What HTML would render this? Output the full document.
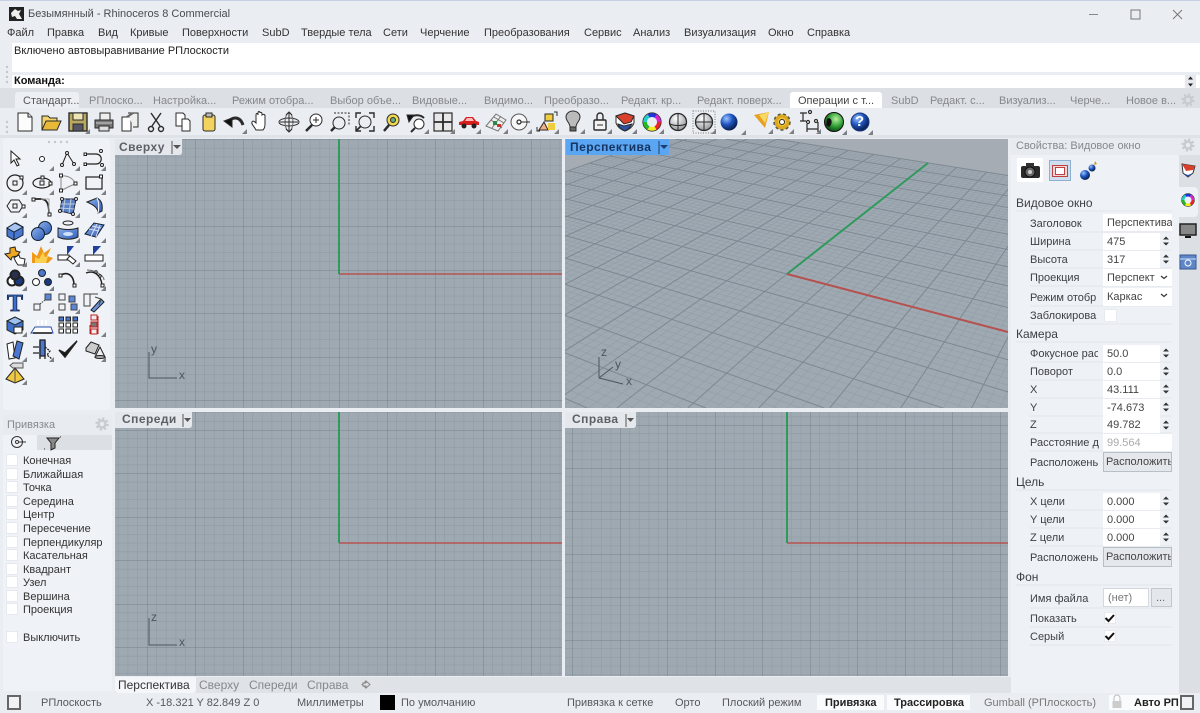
<!DOCTYPE html>
<html lang="ru"><head><meta charset="utf-8"><title>Rhinoceros 8</title>
<style>
html,body{margin:0;padding:0;overflow:hidden;height:713px}
body{width:1200px;background:#eaedf2;position:relative;font:11px/14px "Liberation Sans","Noto Sans CJK SC",sans-serif;color:#333}
#r{position:absolute;left:0;top:0;width:1200px;height:713px;overflow:hidden;filter:blur(.3px)}
.b{position:absolute}
.t{position:absolute;white-space:nowrap}
.t[style^="left:23px"]{margin-top:1px}
.tab{color:#85888d}
.pn{color:#858a90;margin-top:1px}
.vl{color:#5d6166;font-weight:bold;font-size:12px;letter-spacing:.45px}
.l{color:#3c3f44;left:1030px;margin-top:1px}
.h{color:#3c3f44;left:1016px;font-size:12px}
.f{position:absolute;left:1103px;width:57px;height:17px;background:#fff;color:#444;line-height:18px;padding-left:4px;box-sizing:border-box;white-space:nowrap;overflow:hidden}
.w{width:69px}
.btn{background:#e4e7ec;border:1px solid #b9bfc7;padding-left:2px;height:20px;line-height:19px}
.c{position:absolute;width:12px;height:12px;background:#fff;border:1px solid #e6e9ed;box-sizing:border-box;left:6px}
.s{color:#55585d;margin-top:1px}
svg{position:absolute;left:0;top:0}
</style></head><body><div id="r">
<div class="b" style="left:0;top:0;width:1200px;height:1px;background:#c5d0e2"></div>
<div class="b" style="left:12px;top:43px;width:1188px;height:29px;background:#fff"></div>
<div class="b" style="left:12px;top:75px;width:1188px;height:13px;background:#fff"></div>
<div class="b" style="left:0;top:88px;width:1200px;height:20px;background:#dcdfe3"></div>
<div class="b" style="left:15px;top:92px;width:64px;height:16px;background:#eceff4;border-radius:3px 3px 0 0"></div>
<div class="b" style="left:790px;top:92px;width:92px;height:16px;background:#fff;border-radius:3px 3px 0 0"></div>
<div class="b" style="left:0;top:135px;width:1200px;height:3px;background:#dfe3e8"></div>
<div class="b" style="left:3px;top:138px;width:107px;height:272px;background:#eff2f6;border-radius:3px"></div>
<div class="b" style="left:3px;top:415px;width:109px;height:276px;background:#eff2f6"></div>
<div class="b" style="left:3px;top:415px;width:109px;height:20px;background:#e8ebf0"></div>
<div class="b" style="left:37px;top:435px;width:75px;height:15px;background:#dcdfe3"></div>
<div class="b" style="left:115px;top:677px;width:896px;height:16px;background:#dfe2e6"></div>
<div class="b" style="left:115px;top:677px;width:81px;height:16px;background:#f4f6f9;border-radius:0 0 3px 3px"></div>
<div class="b" style="left:1011px;top:138px;width:189px;height:555px;background:#eef1f5"></div>
<div class="b" style="left:1011px;top:138px;width:189px;height:17px;background:#e8ebf0"></div>
<div class="b" style="left:1179px;top:155px;width:21px;height:538px;background:#dcdfe3"></div>
<div class="b" style="left:1179px;top:187px;width:19px;height:30px;background:#eef1f5;border-radius:0 4px 4px 0"></div>
<div class="b" style="left:1017px;top:158px;width:26px;height:24px;background:#fff"></div>
<div class="b" style="left:1049px;top:160px;width:22px;height:21px;background:#cfdff0;border:1px solid #8fb0cf;box-sizing:border-box"></div>
<div class="b" style="left:817px;top:695px;width:67px;height:15px;background:#fafbfc"></div>
<div class="b" style="left:887px;top:695px;width:83px;height:15px;background:#fafbfc"></div>
<div class="b" style="left:1109px;top:695px;width:71px;height:15px;background:#fafbfc"></div>

<svg width="1200" height="713" viewBox="0 0 1200 713">
<defs>
<pattern id="pa" width="48" height="43.5" patternUnits="userSpaceOnUse" patternTransform="translate(3 9)"><g id="pg" stroke="#949ea8" stroke-width=".8" fill="none"><path d="M9.6 0v43.5M19.2 0v43.5M28.8 0v43.5M38.4 0v43.5M0 8.7h48M0 17.4h48M0 26.1h48M0 34.8h48"/></g><path d="M0 0v43.5M0 0h48" stroke="#77818b" fill="none"/></pattern>
<pattern id="pb" width="48" height="43.5" patternUnits="userSpaceOnUse" patternTransform="translate(3 -5)"><use href="#pg"/><path d="M0 0v43.5M0 0h48" stroke="#77818b" fill="none"/></pattern>
<pattern id="pc" width="47.5" height="43" patternUnits="userSpaceOnUse" patternTransform="translate(2.5 -5)"><use href="#pg"/><path d="M0 0v43M0 0h47.5" stroke="#77818b" fill="none"/></pattern>
<clipPath id="cp"><rect x="565" y="139" width="443" height="269"/></clipPath>
<radialGradient id="bb" cx=".35" cy=".3" r=".8"><stop offset="0" stop-color="#9cc4ff"/><stop offset=".45" stop-color="#1f55c0"/><stop offset="1" stop-color="#02102e"/></radialGradient>
<radialGradient id="gg" cx=".6" cy=".35" r=".8"><stop offset="0" stop-color="#b8f0a0"/><stop offset=".5" stop-color="#2a9a30"/><stop offset="1" stop-color="#02200a"/></radialGradient>
<radialGradient id="ll" cx=".4" cy=".3" r=".8"><stop offset="0" stop-color="#fff"/><stop offset="1" stop-color="#8a8d92"/></radialGradient>
<linearGradient id="bl" x1="0" y1="0" x2="1" y2="1"><stop offset="0" stop-color="#8db0ec"/><stop offset="1" stop-color="#2d5cb8"/></linearGradient>
<path id="m" d="M12 7v5h-5z" fill="#7c8085" stroke="none"/>
<g id="gear" fill="none" stroke="#c8ccd1"><circle r="3.5" stroke-width="2.5"/><circle r="5.6" stroke-width="2" stroke-dasharray="2.2 2.2"/></g>
<g id="wheel" fill="none" stroke-width="4"><circle r="7" stroke="#e22" stroke-dasharray="7.4 36.6"/><circle r="7" stroke="#ee2" stroke-dasharray="7.4 36.6" stroke-dashoffset="-7.3"/><circle r="7" stroke="#2b2" stroke-dasharray="7.4 36.6" stroke-dashoffset="-14.6"/><circle r="7" stroke="#2cc" stroke-dasharray="7.4 36.6" stroke-dashoffset="-22"/><circle r="7" stroke="#23d" stroke-dasharray="7.4 36.6" stroke-dashoffset="-29.3"/><circle r="7" stroke="#d2c" stroke-dasharray="7.4 36.6" stroke-dashoffset="-36.6"/><circle r="9.2" stroke="#333" stroke-width=".8"/></g>
</defs>
<!-- viewports -->
<rect x="115" y="139" width="447" height="269" fill="#9fa9b2"/><rect x="115" y="139" width="447" height="269" fill="url(#pa)"/>
<rect x="115" y="412" width="447" height="264" fill="#9fa9b2"/><rect x="115" y="412" width="447" height="264" fill="url(#pb)"/>
<rect x="565" y="412" width="443" height="264" fill="#9fa9b2"/><rect x="565" y="412" width="443" height="264" fill="url(#pc)"/>
<rect x="565" y="139" width="443" height="269" fill="#a5acb3"/>
<g clip-path="url(#cp)"><path d="M693 126L1279 218L1008 600L48 358Z" fill="#9fa9b2"/><g id="pers" fill="none"></g></g>
<path d="M339 139V274" stroke="#2f9a5c" stroke-width="2"/><path d="M339 274H562" stroke="#b5524f" stroke-width="1.6"/>
<path d="M339 412V543" stroke="#2f9a5c" stroke-width="2"/><path d="M339 543H562" stroke="#b5524f" stroke-width="1.6"/>
<path d="M787 412V543" stroke="#2f9a5c" stroke-width="2"/><path d="M787 543H1008" stroke="#b5524f" stroke-width="1.6"/>
<path d="M787 274L928 163" stroke="#2f9a5c" stroke-width="2"/><path d="M787 274L1008 332" stroke="#b5524f" stroke-width="2"/>
<g fill="none" stroke="#4e545b" stroke-width="1"><path d="M149 352V378H177"/><path d="M149 618V645H177"/><path d="M599 378L623 384M599 378V357M599 378L613 367"/></g>
<!-- label tabs -->
<path d="M115 139H182V152q0 3-3 3H115Z" fill="#e4e7ec"/><path d="M115 412H192V425q0 3-3 3H115Z" fill="#e4e7ec"/><path d="M565 412H636V425q0 3-3 3H565Z" fill="#e4e7ec"/><path d="M566 139H669V155H566Z" fill="#5aa6f2"/>
<g stroke="#555" fill="none"><path d="M172 141V154"/><path d="M183 414V427"/><path d="M626 414V427"/></g><path d="M659 141V154" stroke="#1d3d6b"/>
<path d="M173 145h8l-4 4zM184 418h7l-3.500 4zM627 418h7l-3.500 4z" fill="#555"/><path d="M660 145h8l-4 4z" fill="#1d3d6b"/>
<!-- grips -->
<g fill="#c3c7cc"><circle cx="7" cy="67" r="1.200"/><circle cx="7" cy="72" r="1.200"/><circle cx="7" cy="77" r="1.200"/><circle cx="7" cy="82" r="1.200"/><circle cx="7" cy="122" r="1.200"/><circle cx="7" cy="127" r="1.200"/><circle cx="7" cy="132" r="1.200"/><circle cx="49" cy="142" r="1.200"/><circle cx="55" cy="142" r="1.200"/><circle cx="61" cy="142" r="1.200"/><circle cx="67" cy="142" r="1.200"/></g>
<!-- window controls -->
<path d="M1089 14.500h9" stroke="#888" stroke-width="1"/><rect x="1131" y="10" width="9" height="9" fill="none" stroke="#777"/><path d="M1173 10l9 9m0-9l-9 9" stroke="#777" fill="none"/>
<!-- logo -->
<rect x="9" y="7" width="15" height="14" fill="#222"/><path d="M11 13l4-4 3 2 3-1-2 4 3 5h-5l-2-3-3 1z" fill="#eee"/>
<!-- cmd scroll -->
<rect x="1185" y="75" width="11" height="13" fill="#e5e8ec"/><path d="M1190.500 76.500l2.500 3h-5zM1190.500 86.500l-2.500-3h5z" fill="#222"/>
<use href="#gear" x="1188" y="100"/><use href="#gear" x="102" y="424"/><use href="#gear" x="1188" y="145"/>

<!-- top toolbar -->
<g stroke="#2b2b2b" stroke-width="1" fill="none">
<g transform="translate(25 122)"><path d="M-7-9H3L7-5V9H-7Z" fill="#fcfcfc"/><path d="M3-9V-5H7" fill="#ddd"/></g>
<g transform="translate(51 122)"><path d="M-9 8V-6H-3L-1-4H6V-1" fill="#f2d46a"/><path d="M-9 8L-5-1H10L6 8Z" fill="#e8b838"/></g>
<g transform="translate(78 122)"><rect x="-9" y="-9" width="18" height="18" fill="#b8a860" stroke-width="1.400"/><rect x="-5" y="-9" width="10" height="7" fill="#efe6b8"/><rect x="-5" y="2" width="10" height="7" fill="#556"/><use href="#m"/></g>
<g transform="translate(104 122)"><path d="M-4-9H6V-2H-4Z" fill="#eee"/><path d="M-9-2H9V6H-9Z" fill="#777"/><path d="M-5 4H5V9H-5Z" fill="#ddd"/><path d="M-8 1H8" stroke="#ccc"/></g>
<g transform="translate(130 122)"><path d="M-8-5H1V9H-8Z" fill="#fff"/><path d="M-2-9H8V5H3" fill="#eee"/><path d="M-3-5L3-9" stroke="#666" stroke-width="2"/></g>
<g transform="translate(156 122)" stroke-width="1.400"><path d="M-5-9L4 4M5-9L-4 4"/><circle cx="-5" cy="7" r="2.500"/><circle cx="5" cy="7" r="2.500"/></g>
<g transform="translate(183 122)"><path d="M-7-9H0L2-7V4H-7Z" fill="#fff"/><path d="M-1-3H5L7-1V9H-1Z" fill="#fff"/></g>
<g transform="translate(209 122)"><rect x="-6" y="-7" width="12" height="16" rx="2" fill="#f3d35e"/><rect x="-3" y="-9" width="6" height="4" fill="#bbb"/></g>
<g transform="translate(235 122)"><path d="M-7 1C-3-6 5-6 8 3" stroke-width="3"/><path d="M-11-1L-3 5-3-4Z" fill="#111"/><use href="#m"/></g>
<g transform="translate(260 122)"><path d="M-4 8C-6 4-9 2-8 0-7-2-5 0-4 1V-7C-4-9-2-9-2-7V-9C-2-11 0-11 0-9V-9C0-10 2-10 2-8V-7C3-8 5-8 5-6V2C5 5 4 7 3 8Z" fill="#fff"/></g>
<g transform="translate(289 122)"><ellipse rx="10" ry="4"/><ellipse rx="4" ry="9" stroke="#666"/><path d="M0-10V10M-9 0H9"/><path d="M-3-7L0-10 3-7M-3 7L0 10 3 7" /></g>
<g transform="translate(314 122)"><circle cx="2" cy="-2" r="6" fill="#fff"/><path d="M-2 3L-8 9" stroke-width="2.500"/><path d="M2-5V1M-1-2H5"/></g>
<g transform="translate(340 122)"><circle cx="-1" cy="1" r="6"/><path d="M-5 5L-9 9" stroke-width="2.500"/><path d="M-6-9H9V3" stroke-dasharray="2 1.500"/></g>
<g transform="translate(365 122)"><circle r="6"/><path d="M-9-4V-9H-4M9-4V-9H4M-9 4V9H-4M9 4V9H4" stroke-width="1.400"/><path d="M-4 4L-9 9" stroke-width="1.800"/></g>
<g transform="translate(392 122)"><circle cx="1" cy="-2" r="6" fill="#f0d850"/><circle cx="1" cy="-2" r="2.500" fill="#6a8"/><path d="M-3 3L-8 9" stroke-width="2.500"/></g>
<g transform="translate(417 122)"><circle cx="2" cy="2" r="5" fill="#fff"/><path d="M-2 6L-6 10" stroke-width="2"/><path d="M-8-2C-5-8 3-8 7-4" stroke-width="2"/><path d="M-10-7L-3-7-8 0Z" fill="#111"/><use href="#m"/></g>
<g transform="translate(443 122)"><rect x="-9" y="-9" width="18" height="18" fill="#e8e8e8" stroke-width="1.200"/><path d="M0-9V9M-9 0H9" stroke-width="1.800"/><use href="#m"/></g>
<g transform="translate(469 122)" stroke="none"><path d="M-10 3V0L-6-1-3-5H4L7-1 10 0V3Z" fill="#d81f1f"/><circle cx="-5" cy="4" r="2.500" fill="#222"/><circle cx="5" cy="4" r="2.500" fill="#222"/><path d="M-2-4H3L5-1H-4Z" fill="#fbb"/><use href="#m"/></g>
<g transform="translate(496 122)" stroke="#777"><path d="M-10 4L0-8 10-2 2 9Z" fill="#eee"/><path d="M-5-2L6 6M-2-5L8 1M-4 6L5-6"/><path d="M-3-1h4v4h-4z" fill="#2a8a4a" stroke="none"/><path d="M1 2h4v3h-4z" fill="#c33" stroke="none"/><use href="#m"/></g>
<g transform="translate(520 122)"><circle cx="-1" r="8" stroke="#555" fill="#f8f8f8"/><circle cx="-1" r="2" stroke-width="1.200"/><path d="M1 0H10"/><use href="#m"/></g>
<g transform="translate(547 122)"><rect x="-2" y="-8" width="8" height="7" fill="#f0cc40"/><path d="M-8 8L-3 0 1 8Z" fill="#f4b080"/><rect x="1" y="1" width="7" height="7" fill="#f0cc40" stroke="none"/><path d="M7-10H10V-6M-10 5V9H-7"/><use href="#m"/></g>
<g transform="translate(573 122)"><path d="M-3 5C-3 1-7-1-7-5A7 6 0 0 1 7-5C7-1 3 1 3 5Z" fill="#bbb"/><rect x="-3" y="5" width="6" height="4" fill="#666"/><use href="#m"/></g>
<g transform="translate(600 122)"><rect x="-6" y="-2" width="12" height="10" rx="1" fill="#f2f2f2" stroke-width="1.400"/><path d="M-3-2V-6A3 3 0 0 1 3-6V-2" stroke-width="1.400"/><path d="M-3 3H3"/><use href="#m"/></g>
<g transform="translate(625 122)"><path d="M-9-6L0-9 9-6V1C7 6 3 8 0 9-3 8-7 6-9 1Z" fill="#fff"/><path d="M-9-6L0-9 9-6 6 0-1 2Z" fill="#d8402c"/><path d="M-7 2L-1 4 7 2C5 6 2 8 0 9-3 8-6 6-7 2Z" fill="#2a50a8"/><use href="#m"/></g>
<g transform="translate(652 122)"><use href="#wheel"/><use href="#m"/></g>
<g transform="translate(678 122)"><circle r="8.500" fill="url(#ll)" stroke-width="1.300"/><path d="M0-8.500V8.500M-8 2C-4 4 4 4 8 2"/></g>
<g transform="translate(704 122)"><rect x="-11" y="-11" width="22" height="22" stroke="#777" stroke-dasharray="1 1.500"/><circle r="8.500" fill="url(#ll)" stroke-width="1.300"/><path d="M0-8.500V8.500M-8 0H8"/><use href="#m"/></g>
<g transform="translate(729 122)"><circle r="8.500" fill="url(#bb)" stroke="none"/><use href="#m" x="5" y="1"/></g>
<g transform="translate(761 122)" stroke="none"><path d="M-7-7L8-10 4 6Z" fill="#e8a020"/><path d="M-2-7L8-10 4 1Z" fill="#f8d860"/><use href="#m"/></g>
<g transform="translate(782 122)"><circle r="6" fill="#f0c838" stroke-width="3.500" stroke="#dca820" /><circle r="8" stroke="#554" stroke-dasharray="3 2.500" stroke-width="1.500"/><circle r="2.500" fill="#fff"/><use href="#m"/></g>
<g transform="translate(809 122)" stroke-width="1.200"><path d="M-9-9H-2M-6-9V-1M-9-1H-3"/><circle cx="1" cy="-10" r="1.500" fill="#fff"/><circle cx="-1" cy="0" r="1.500" fill="#fff"/><path d="M-2 2V10M9 0V10M-2 7H9"/><circle cx="7" cy="-1" r="1.500" fill="#fff"/><use href="#m"/></g>
<g transform="translate(834 122)"><circle r="9.500" fill="url(#gg)" stroke="#111"/><path d="M-7-3C-3-6 0 1-5 5L-8 3Z" fill="#111" stroke="none"/><use href="#m" x="1" y="1"/></g>
<g transform="translate(860 122)"><circle r="9" fill="url(#bb)" stroke="#1a3a80"/><use href="#m" x="1" y="1"/></g>
</g>

<!-- left toolbar -->
<g stroke="#222" stroke-width="1" fill="none">
<g transform="translate(15 159)"><path d="M-4-8V4L-1 1 2 7 4 6 1 0H5Z" fill="#fff"/></g>
<g transform="translate(42 159)"><circle r="2.500" fill="#fff"/><use href="#m"/></g>
<g transform="translate(68 159)"><path d="M-6 6L-1-6 6 5"/><g fill="#fff"><circle cx="-6" cy="6" r="1.500"/><circle cx="-1" cy="-6" r="1.500"/><circle cx="6" cy="5" r="1.500"/></g><use href="#m"/></g>
<g transform="translate(94 159)"><path d="M-7-5H2C9-5 9 5 2 5H-7" stroke-width="1.200"/><g fill="#fff"><rect x="-10" y="-6" width="2.500" height="2.500"/><rect x="-10" y="4" width="2.500" height="2.500"/><circle cx="7" cy="-8" r="1.500"/><circle cx="8" cy="6" r="1.500"/></g><use href="#m"/></g>
<g transform="translate(15 183)"><circle r="8" stroke-width="1.200"/><rect x="-2" y="-2" width="4" height="4"/><rect x="5" y="-7" width="3" height="3" fill="#fff"/><use href="#m"/></g>
<g transform="translate(42 183)"><ellipse rx="9" ry="5" stroke-width="1.200"/><rect x="-2" y="-2" width="4" height="4"/><rect x="-1" y="-7" width="3" height="3" fill="#fff"/><rect x="7" y="-1" width="3" height="3" fill="#fff"/><use href="#m"/></g>
<g transform="translate(68 183)"><path d="M-7-7C2-8 7-2 7 1 2 3-4 6-7 8Z" stroke="#888"/><g fill="#fff"><rect x="-8.500" y="-9" width="3" height="3"/><rect x="6" y="-1" width="3" height="3"/><rect x="-8.500" y="6" width="3" height="3"/></g><use href="#m"/></g>
<g transform="translate(94 183)"><rect x="-8" y="-6" width="16" height="12" stroke-width="1.200"/><rect x="5.500" y="-8" width="3" height="3" fill="#fff"/><use href="#m"/></g>
<g transform="translate(15 206)"><path d="M-8 0L-4-6H4L8 0 4 6H-4Z"/><rect x="-2" y="-2" width="4" height="4"/><rect x="7" y="-1" width="3" height="3" fill="#fff"/><use href="#m"/></g>
<g transform="translate(42 206)"><path d="M-9-7H-1C5-7 7-2 7 8" stroke-width="1.800"/><path d="M-1-7H7V8" stroke="#aaa"/><g fill="#fff"><rect x="-10" y="-8" width="3" height="3"/><rect x="6" y="7" width="3" height="3"/></g></g>
<g transform="translate(68 206)"><path d="M-6-7L8-7 5 8-8 5Z" fill="#5a80c8" stroke="#223"/><path d="M-3-7L-5 6M3-7L1 7M-7-2L7-2M-8 2L6 3" stroke="#bcd"/><g fill="#fff"><circle cx="-6" cy="-7" r="1.500"/><circle cx="8" cy="-7" r="1.500"/><circle cx="5" cy="8" r="1.500"/><circle cx="-8" cy="5" r="1.500"/></g><use href="#m"/></g>
<g transform="translate(94 206)"><path d="M-7-4L3-8C7-6 9-2 8 5L4 7C4 2 0-1-7-4Z" fill="url(#bl)"/><path d="M3-8C5-4 5 2 4 7" stroke="#fff"/><use href="#m"/></g>
<g transform="translate(15 231)"><path d="M-8-3L1-8 8-4V4L-1 9-8 5Z" fill="#4a78d0" stroke="#123"/><path d="M-8-3L-1 1 8-4-0-8Z" fill="#a8c4f0" stroke="#123"/><path d="M-1 1V9" stroke="#123"/><use href="#m"/></g>
<g transform="translate(42 231)"><circle cx="3" cy="-3" r="6.500" fill="url(#bl)" stroke="#123"/><circle cx="-4" cy="3" r="6.500" fill="url(#bl)" stroke="#123"/><use href="#m"/></g>
<g transform="translate(68 231)"><ellipse cy="-8" rx="5" ry="2"/><path d="M-10-3C-4-1 4-1 10-3V6C4 9-4 9-10 6Z" fill="url(#bl)"/><ellipse cy="3" rx="5" ry="2" fill="#cfe0f8" stroke="none"/><use href="#m"/></g>
<g transform="translate(94 231)"><path d="M-9 3L0-8 10-6 2 6Z" fill="url(#bl)" stroke="#123"/><path d="M-5-2L5 0M-2-5L7-3M-3 5L3-7M2 6L6-6" stroke="#dde"/><use href="#m"/></g>
<g transform="translate(15 255)"><path d="M-10-1L-5-2-5-7 0-8 1-4 5-3 2 1-3 2-4 5Z" fill="#f0a820" stroke="#222"/><path d="M-1 3L4 0 5 3 10 4 9 10 3 10 1 7Z" fill="#fff" stroke="#222"/><use href="#m"/></g>
<g transform="translate(42 255)" stroke="none"><path d="M-10 8V-3L-5 1-1-9 2-2 9-7 5 1 11 3 6 8Z" fill="#f09818"/><path d="M-7 8V2L-3 4 1-3 3 2 6 1 4 8Z" fill="#fbd050"/></g>
<g transform="translate(68 255)"><rect x="-10" y="0" width="11" height="5" fill="#fff"/><path d="M-1 0V-9L6-9-1 0" fill="#2040a0" stroke="none"/><path d="M2 1L8 6 5 9-1 4Z" fill="#fff"/><use href="#m"/></g>
<g transform="translate(94 255)"><rect x="-9" y="0" width="18" height="6" fill="#fff"/><path d="M-1 0V-9L7-9-1 0" fill="#2040a0" stroke="none"/><use href="#m"/></g>
<g transform="translate(15 279)"><circle cx="-3" cy="2" r="4.500" fill="#fff" stroke-width="2"/><circle cx="4" cy="2" r="4.500" fill="#1b3a80" stroke-width="2"/><circle cy="-4" r="4.500" fill="#28304a" stroke-width="2"/><use href="#m"/></g>
<g transform="translate(42 279)"><circle cy="-6" r="3.500" fill="#4a78d0"/><circle cx="-6" cy="3" r="3.500" fill="#fff"/><circle cx="6" cy="3" r="3.500" fill="#1b3a80"/><use href="#m"/></g>
<g transform="translate(68 279)"><path d="M-7-4C0-8 6-3 6 6" stroke-width="1.600"/><rect x="-9" y="-5" width="3" height="3" fill="#fff"/><rect x="5" y="5" width="3" height="3" fill="#fff"/></g>
<g transform="translate(94 279)"><path d="M-8-6C0-9 7-4 8 6" stroke-width="1.400"/><path d="M-7-9C2-9 10-3 10 1" stroke="#666"/><g fill="#fff"><circle cx="2" cy="-7" r="1.200"/><circle cx="6" cy="-3" r="1.200"/><rect x="7" y="5" width="3" height="3"/></g><use href="#m"/></g>
<g transform="translate(15 302)"><text x="0" y="9" text-anchor="middle" font-family="Liberation Serif" font-weight="bold" font-size="24" fill="#3d70c8" stroke="#102050" stroke-width=".8">T</text></g>
<g transform="translate(42 302)" stroke="#444"><rect x="-8" y="2" width="6" height="6"/><rect x="3" y="-8" width="6" height="6" fill="#5a88d8"/><path d="M-2 2L3-2" stroke-dasharray="1.500 1"/><use href="#m"/></g>
<g transform="translate(68 302)" stroke="#444"><rect x="-9" y="-8" width="6" height="6"/><rect x="-9" y="2" width="6" height="6"/><rect x="1" y="-6" width="6" height="6" fill="#5a88d8"/><rect x="3" y="2" width="6" height="6" fill="#5a88d8"/><use href="#m"/></g>
<g transform="translate(94 302)"><path d="M-10-8H-4V4H-10ZM-4-8H4" stroke="#444"/><path d="M-3 8L7-3 10 0 0 10Z" fill="#6a94dc"/><path d="M1-5L7-3 5 3" stroke="#444"/></g>
<g transform="translate(15 325)"><path d="M-8-4L0-8 8-4V5L0 9-8 5Z" fill="#3f70cc"/><path d="M-8-4L0-8 8-4 0 0Z" fill="#9cc0f0"/><path d="M-1 2H7V8H-1Z" fill="#fff"/><use href="#m"/></g>
<g transform="translate(42 325)"><path d="M-11 8L-7 2H9L11 8Z" fill="#fff" stroke="#2a50a8"/><path d="M-4 0V-5M0 0V-5M4 0V-5" stroke="#fff" stroke-width="2"/><path d="M-9 8H10" stroke="#111" stroke-width="1.400"/></g>
<g transform="translate(68 325)" fill="#4a78d0" stroke="#222"><rect x="-9" y="-8" width="4.500" height="4"/><rect x="-2" y="-8" width="4.500" height="4"/><rect x="5" y="-8" width="4.500" height="4"/><rect x="-9" y="-2" width="4.500" height="4" fill="#fff"/><rect x="-2" y="-2" width="4.500" height="4" fill="#fff"/><rect x="5" y="-2" width="4.500" height="4" fill="#fff"/><rect x="-9" y="4" width="4.500" height="4" fill="#fff"/><rect x="-2" y="4" width="4.500" height="4" fill="#fff"/><rect x="5" y="4" width="4.500" height="4" fill="#fff"/></g>
<g transform="translate(94 325)" stroke="#c02020"><rect x="-3" y="-10" width="6" height="5" fill="#eee"/><rect x="-3" y="-3" width="6" height="5" fill="#777"/><rect x="-3" y="4" width="6" height="5" fill="#eee"/><path d="M-4 0V9M4-9V9"/><use href="#m"/></g>
<g transform="translate(15 350)"><path d="M-8-6L-2-8 0 8-6 9Z" fill="#fff"/><path d="M2-9L8-7 4 9-2 6Z" fill="#4a78d0"/><use href="#m"/></g>
<g transform="translate(42 350)" stroke-width="1.300"><path d="M-9-3H-3M-9 3H-3M-2-9V9M3-9V9" /><rect x="-2" y="-10" width="5" height="16" fill="#4a78d0"/><path d="M3-3L8 1 5 5 10 9" stroke-dasharray="2 1"/><use href="#m"/></g>
<g transform="translate(68 350)"><path d="M-9 0L-3 7 9-9-3 3Z" fill="#111" stroke-width="1.500"/></g>
<g transform="translate(94 350)"><path d="M-8-2L-3-8 5-5 1 4-8 1Z" fill="#ccc"/><path d="M6-3L11 7H1Z" fill="#eee"/><ellipse cx="6" cy="7" rx="5" ry="1.500" fill="#aaa"/><use href="#m"/></g>
<g transform="translate(15 373)"><path d="M-2-10H8V-5H-2L-5-7.500Z" fill="#ddd" stroke="#555"/><path d="M-9 6L0-5 9 6 0 10Z" fill="#f0c840"/><path d="M0-5V10" stroke="#555"/><use href="#m"/></g>
</g>

<!-- snap tab icons -->
<g fill="none" stroke="#333"><circle cx="17" cy="442" r="5.500"/><circle cx="17" cy="442" r="1.500" fill="#fff"/><path d="M19 442H26"/><path d="M47 438H59L55 443V448L51 450V443Z" fill="#888" stroke="#222"/><path d="M44 449h1M60 437h1"/></g>

<!-- right panel icons -->
<g>
<rect x="1021" y="166" width="19" height="12" rx="2" fill="#2a2a2a"/><rect x="1026" y="163" width="8" height="4" fill="#333"/><circle cx="1030" cy="172" r="5" fill="#666" stroke="#111"/><circle cx="1030" cy="172" r="2" fill="#ccc"/>
<rect x="1052.500" y="165.500" width="15" height="11" fill="#f4d8d8" stroke="#c04040"/><rect x="1055.500" y="167.500" width="9" height="7" fill="#fff" stroke="#c04040"/>
<circle cx="1085" cy="175" r="5" fill="url(#bb)"/><circle cx="1092" cy="168" r="3.500" fill="url(#bb)"/><path d="M1095 161l2 3-3 1z" fill="#c8a020"/>
<g transform="translate(1188 170)"><path d="M-6-6L0-5 7-4 5 3 0 7-5 3Z" fill="#fff" stroke="#333"/><path d="M-6-6L7-4 5 0-2 1Z" fill="#d8402c"/><path d="M-5 3L0 5 5 3 0 7Z" fill="#2a50a8"/></g>
<g transform="translate(1188 200) scale(.7)"><use href="#wheel"/></g>
<g transform="translate(1188 231)"><rect x="-8" y="-7" width="16" height="11" fill="#888" stroke="#222" stroke-width="1.500"/><path d="M-3 6H3" stroke="#111" stroke-width="2"/></g>
<g transform="translate(1188 262)"><rect x="-8" y="-7" width="16" height="14" fill="#5f86c8" stroke="#3a5a90"/><path d="M-8-3H8" stroke="#cfe0f8"/><circle cy="1" r="3" fill="none" stroke="#fff"/></g>
</g>
<!-- spinners -->
<g fill="#333" id="sp">
<path d="M1166 236.500l3 3h-6zM1166 245.500l-3-3h6zM1166 254.500l3 3h-6zM1166 263.500l-3-3h6zM1166 348.500l3 3h-6zM1166 357.500l-3-3h6zM1166 366.500l3 3h-6zM1166 375.500l-3-3h6zM1166 384.500l3 3h-6zM1166 393.500l-3-3h6zM1166 402.500l3 3h-6zM1166 411.500l-3-3h6zM1166 420.500l3 3h-6zM1166 429.500l-3-3h6zM1166 496.500l3 3h-6zM1166 505.500l-3-3h6zM1166 514.500l3 3h-6zM1166 523.500l-3-3h6zM1166 532.500l3 3h-6zM1166 541.500l-3-3h6z"/>
</g>
<g stroke="#e2e5ea"><path d="M1016 211H1172M1016 342H1172M1016 490H1172M1016 585H1172M1030 232H1172M1030 250H1172M1030 268H1172M1030 286H1172M1030 306H1172M1030 324H1172M1030 362H1172M1030 380H1172M1030 398H1172M1030 416H1172M1030 433H1172M1030 451H1172M1030 510H1172M1030 528H1172M1030 546H1172M1030 608H1172M1030 627H1172M1030 645H1172"/></g>
<!-- status icons -->
<rect x="8" y="696" width="12" height="13" fill="#f0f2f5" stroke="#666" stroke-width="2"/>
<rect x="1181" y="696" width="12" height="13" fill="#f0f2f5" stroke="#666" stroke-width="2"/>
<rect x="380" y="695" width="15" height="15" fill="#000"/>
<path d="M1114 701V698a3 3 0 0 1 6 0v3" fill="none" stroke="#bbb"/><rect x="1112.500" y="701" width="9" height="7" fill="#ccc"/>
<path d="M366 681v2h-3v3h3v2l4-3.500zM366 681l-4 3.500 4 3.500" fill="none" stroke="#888"/>
</svg>

<!-- title/menu text -->
<div class="t" style="left:28px;top:7px;color:#4a4d52;font-size:11px">Безымянный - Rhinoceros 8 Commercial</div>
<div class="t" style="left:7px;top:26px">Файл</div><div class="t" style="left:47px;top:26px">Правка</div><div class="t" style="left:98px;top:26px">Вид</div><div class="t" style="left:130px;top:26px">Кривые</div><div class="t" style="left:182px;top:26px">Поверхности</div><div class="t" style="left:262px;top:26px">SubD</div><div class="t" style="left:301px;top:26px">Твердые тела</div><div class="t" style="left:383px;top:26px">Сети</div><div class="t" style="left:420px;top:26px">Черчение</div><div class="t" style="left:484px;top:26px">Преобразования</div><div class="t" style="left:584px;top:26px">Сервис</div><div class="t" style="left:633px;top:26px">Анализ</div><div class="t" style="left:684px;top:26px">Визуализация</div><div class="t" style="left:768px;top:26px">Окно</div><div class="t" style="left:807px;top:26px">Справка</div>
<div class="t" style="left:14px;top:44px;color:#222">Включено автовыравнивание РПлоскости</div>
<div class="t" style="left:14px;top:74px;color:#111;font-weight:bold">Команда:</div>
<!-- tabs -->
<div class="t tab" style="top:94px;left:23px;color:#555">Стандарт...</div><div class="t tab" style="left:89px;top:94px">РПлоско...</div><div class="t tab" style="left:153px;top:94px">Настройка...</div><div class="t tab" style="left:232px;top:94px">Режим отобра...</div><div class="t tab" style="left:330px;top:94px">Выбор объе...</div><div class="t tab" style="left:412px;top:94px">Видовые...</div><div class="t tab" style="left:484px;top:94px">Видимо...</div><div class="t tab" style="left:544px;top:94px">Преобразо...</div><div class="t tab" style="left:621px;top:94px">Редакт. кр...</div><div class="t tab" style="left:697px;top:94px">Редакт. поверх...</div><div class="t tab" style="left:798px;top:94px;color:#444">Операции с т...</div><div class="t tab" style="left:891px;top:94px">SubD</div><div class="t tab" style="left:930px;top:94px">Редакт. с...</div><div class="t tab" style="left:999px;top:94px">Визуализ...</div><div class="t tab" style="left:1070px;top:94px">Черче...</div><div class="t tab" style="left:1126px;top:94px">Новое в...</div>
<!-- help glyph -->
<div class="t" style="left:855px;top:113px;color:#fff;font-weight:bold;font-size:15px;line-height:18px">?</div>
<!-- viewport labels -->
<div class="t vl" style="left:119px;top:140px">Сверху</div>
<div class="t vl" style="left:570px;top:140px;color:#16345f">Перспектива</div>
<div class="t vl" style="left:122px;top:412px">Спереди</div>
<div class="t vl" style="left:572px;top:412px">Справа</div>
<div class="t" style="left:151px;top:342px;color:#4e545b;font-size:12px">y</div><div class="t" style="left:179px;top:368px;color:#4e545b;font-size:12px">x</div>
<div class="t" style="left:151px;top:610px;color:#4e545b;font-size:12px">z</div><div class="t" style="left:179px;top:635px;color:#4e545b;font-size:12px">x</div>
<div class="t" style="left:601px;top:345px;color:#4e545b;font-size:12px">z</div><div class="t" style="left:615px;top:357px;color:#4e545b;font-size:12px">y</div><div class="t" style="left:626px;top:374px;color:#4e545b;font-size:12px">x</div>
<!-- bottom tabs -->
<div class="t" style="left:118px;top:678px;color:#333;font-size:12px">Перспектива</div><div class="t tab" style="left:199px;top:678px;font-size:12px">Сверху</div><div class="t tab" style="left:249px;top:678px;font-size:12px">Спереди</div><div class="t tab" style="left:307px;top:678px;font-size:12px">Справа</div>
<!-- snap panel -->
<div class="t pn" style="left:7px;top:417px">Привязка</div>
<div class="c" style="top:454px"></div><div class="t" style="left:23px;top:453px">Конечная</div>
<div class="c" style="top:468px"></div><div class="t" style="left:23px;top:467px">Ближайшая</div>
<div class="c" style="top:481px"></div><div class="t" style="left:23px;top:480px">Точка</div>
<div class="c" style="top:495px"></div><div class="t" style="left:23px;top:494px">Середина</div>
<div class="c" style="top:508px"></div><div class="t" style="left:23px;top:507px">Центр</div>
<div class="c" style="top:522px"></div><div class="t" style="left:23px;top:521px">Пересечение</div>
<div class="c" style="top:536px"></div><div class="t" style="left:23px;top:535px">Перпендикуляр</div>
<div class="c" style="top:549px"></div><div class="t" style="left:23px;top:548px">Касательная</div>
<div class="c" style="top:563px"></div><div class="t" style="left:23px;top:562px">Квадрант</div>
<div class="c" style="top:576px"></div><div class="t" style="left:23px;top:575px">Узел</div>
<div class="c" style="top:590px"></div><div class="t" style="left:23px;top:589px">Вершина</div>
<div class="c" style="top:603px"></div><div class="t" style="left:23px;top:602px">Проекция</div>
<div class="c" style="top:631px"></div><div class="t" style="left:23px;top:630px">Выключить</div>
<!-- properties -->
<div class="t pn" style="left:1016px;top:138px">Свойства: Видовое окно</div>
<div class="t h" style="top:196px">Видовое окно</div>
<div class="t l" style="top:216px">Заголовок</div><div class="f w" style="top:214px">Перспектива</div>
<div class="t l" style="top:234px">Ширина</div><div class="f" style="top:233px">475</div>
<div class="t l" style="top:252px">Высота</div><div class="f" style="top:251px">317</div>
<div class="t l" style="top:270px">Проекция</div><div class="f w" style="top:269px">Перспект</div>
<div class="t l" style="top:290px;width:72px;overflow:hidden">Режим отобр</div><div class="f w" style="top:288px;height:18px;line-height:18px">Каркас</div>
<div class="t l" style="top:308px;width:72px;overflow:hidden">Заблокирова</div><div class="c" style="left:1104px;top:309px;width:13px;height:13px"></div>
<div class="t h" style="top:327px">Камера</div>
<div class="t l" style="top:346px;width:68px;overflow:hidden">Фокусное рас</div><div class="f" style="top:345px">50.0</div>
<div class="t l" style="top:364px">Поворот</div><div class="f" style="top:363px">0.0</div>
<div class="t l" style="top:382px">X</div><div class="f" style="top:381px">43.111</div>
<div class="t l" style="top:400px">Y</div><div class="f" style="top:399px">-74.673</div>
<div class="t l" style="top:417px">Z</div><div class="f" style="top:416px">49.782</div>
<div class="t l" style="top:435px;width:70px;overflow:hidden">Расстояние д</div><div class="f w" style="top:434px;color:#aaa">99.564</div>
<div class="t l" style="top:455px;width:69px;overflow:hidden">Расположень</div><div class="f w btn" style="top:452px">Расположить</div>
<div class="t h" style="top:475px">Цель</div>
<div class="t l" style="top:494px">X цели</div><div class="f" style="top:493px">0.000</div>
<div class="t l" style="top:512px">Y цели</div><div class="f" style="top:511px">0.000</div>
<div class="t l" style="top:530px">Z цели</div><div class="f" style="top:529px">0.000</div>
<div class="t l" style="top:550px;width:69px;overflow:hidden">Расположень</div><div class="f w btn" style="top:547px">Расположить</div>
<div class="t h" style="top:570px">Фон</div>
<div class="t l" style="top:591px">Имя файла</div><div class="f" style="top:588px;width:46px;height:19px;line-height:18px;color:#777;border:1px solid #d5d9df">(нет)</div><div class="f" style="left:1151px;top:588px;width:21px;height:19px;background:#e4e7ec;border:1px solid #c2c7ce;color:#666;line-height:18px">...</div>
<div class="t l" style="top:611px">Показать</div><div class="c" style="left:1104px;top:612px;width:12px;height:12px"></div>
<div class="t l" style="top:629px">Серый</div><div class="c" style="left:1104px;top:630px;width:12px;height:12px"></div>
<svg width="1200" height="713" viewBox="0 0 1200 713" fill="none" stroke="#111">
<path d="M1161 276l3 2.500 3-2.500M1161 294l3 2.500 3-2.500" stroke="#333" stroke-width="1.200"/>
<path d="M1105.500 618l3 3 5.500-6M1105.500 636l3 3 5.500-6" stroke-width="2"/>
</svg>
<!-- status -->
<div class="t s" style="left:41px;top:695px">РПлоскость</div><div class="t s" style="left:146px;top:695px">X -18.321 Y 82.849 Z 0</div><div class="t s" style="left:297px;top:695px">Миллиметры</div><div class="t s" style="left:401px;top:695px">По умолчанию</div><div class="t s" style="left:567px;top:695px">Привязка к сетке</div><div class="t s" style="left:675px;top:695px">Орто</div><div class="t s" style="left:722px;top:695px">Плоский режим</div><div class="t" style="left:825px;top:696px;color:#222;font-weight:bold">Привязка</div><div class="t" style="left:894px;top:696px;color:#222;font-weight:bold">Трассировка</div><div class="t" style="left:984px;top:696px;color:#777">Gumball (РПлоскость)</div><div class="t" style="left:1134px;top:696px;color:#222;font-weight:bold">Авто РП</div>
</div>
<script>
(function(){var g=document.getElementById('pers'),N=10,D=5,T=N*D,O=[787,274],R=[-488,-60],G=[1211,-60],NS='http://www.w3.org/2000/svg';
function P(u,v){var a=-.298*u,b=.498*v,w=1+a+b;return[(O[0]+a*R[0]+b*G[0])/w,(O[1]+a*R[1]+b*G[1])/w]}
function clip(p,q){var t0=0,t1=1,dx=q[0]-p[0],dy=q[1]-p[1],A=[-dx,dx,-dy,dy],B=[p[0]-565,1008-p[0],p[1]-139,408-p[1]];for(var i=0;i<4;i++){if(A[i]===0){if(B[i]<0)return null}else{var r=B[i]/A[i];if(A[i]<0){if(r>t1)return null;if(r>t0)t0=r}else{if(r<t0)return null;if(r<t1)t1=r}}}return[[p[0]+t0*dx,p[1]+t0*dy],[p[0]+t1*dx,p[1]+t1*dy]]}
function L(p,q,c,w){var s=clip(p,q);if(!s)return;var e=document.createElementNS(NS,'line');e.setAttribute('x1',s[0][0]);e.setAttribute('y1',s[0][1]);e.setAttribute('x2',s[1][0]);e.setAttribute('y2',s[1][1]);e.setAttribute('stroke',c);e.setAttribute('stroke-width',w);g.appendChild(e)}
for(var pass=0;pass<2;pass++)for(var i=-T;i<=T;i++){var mj=i%D===0;if(mj!==(pass===1))continue;var c=mj?'#7e8892':'#939da7',w=mj?'1':'.6',t=i/T;L(P(t,-1),P(t,1),c,w);L(P(-1,t),P(1,t),c,w)}
})();
</script>
</body></html>
